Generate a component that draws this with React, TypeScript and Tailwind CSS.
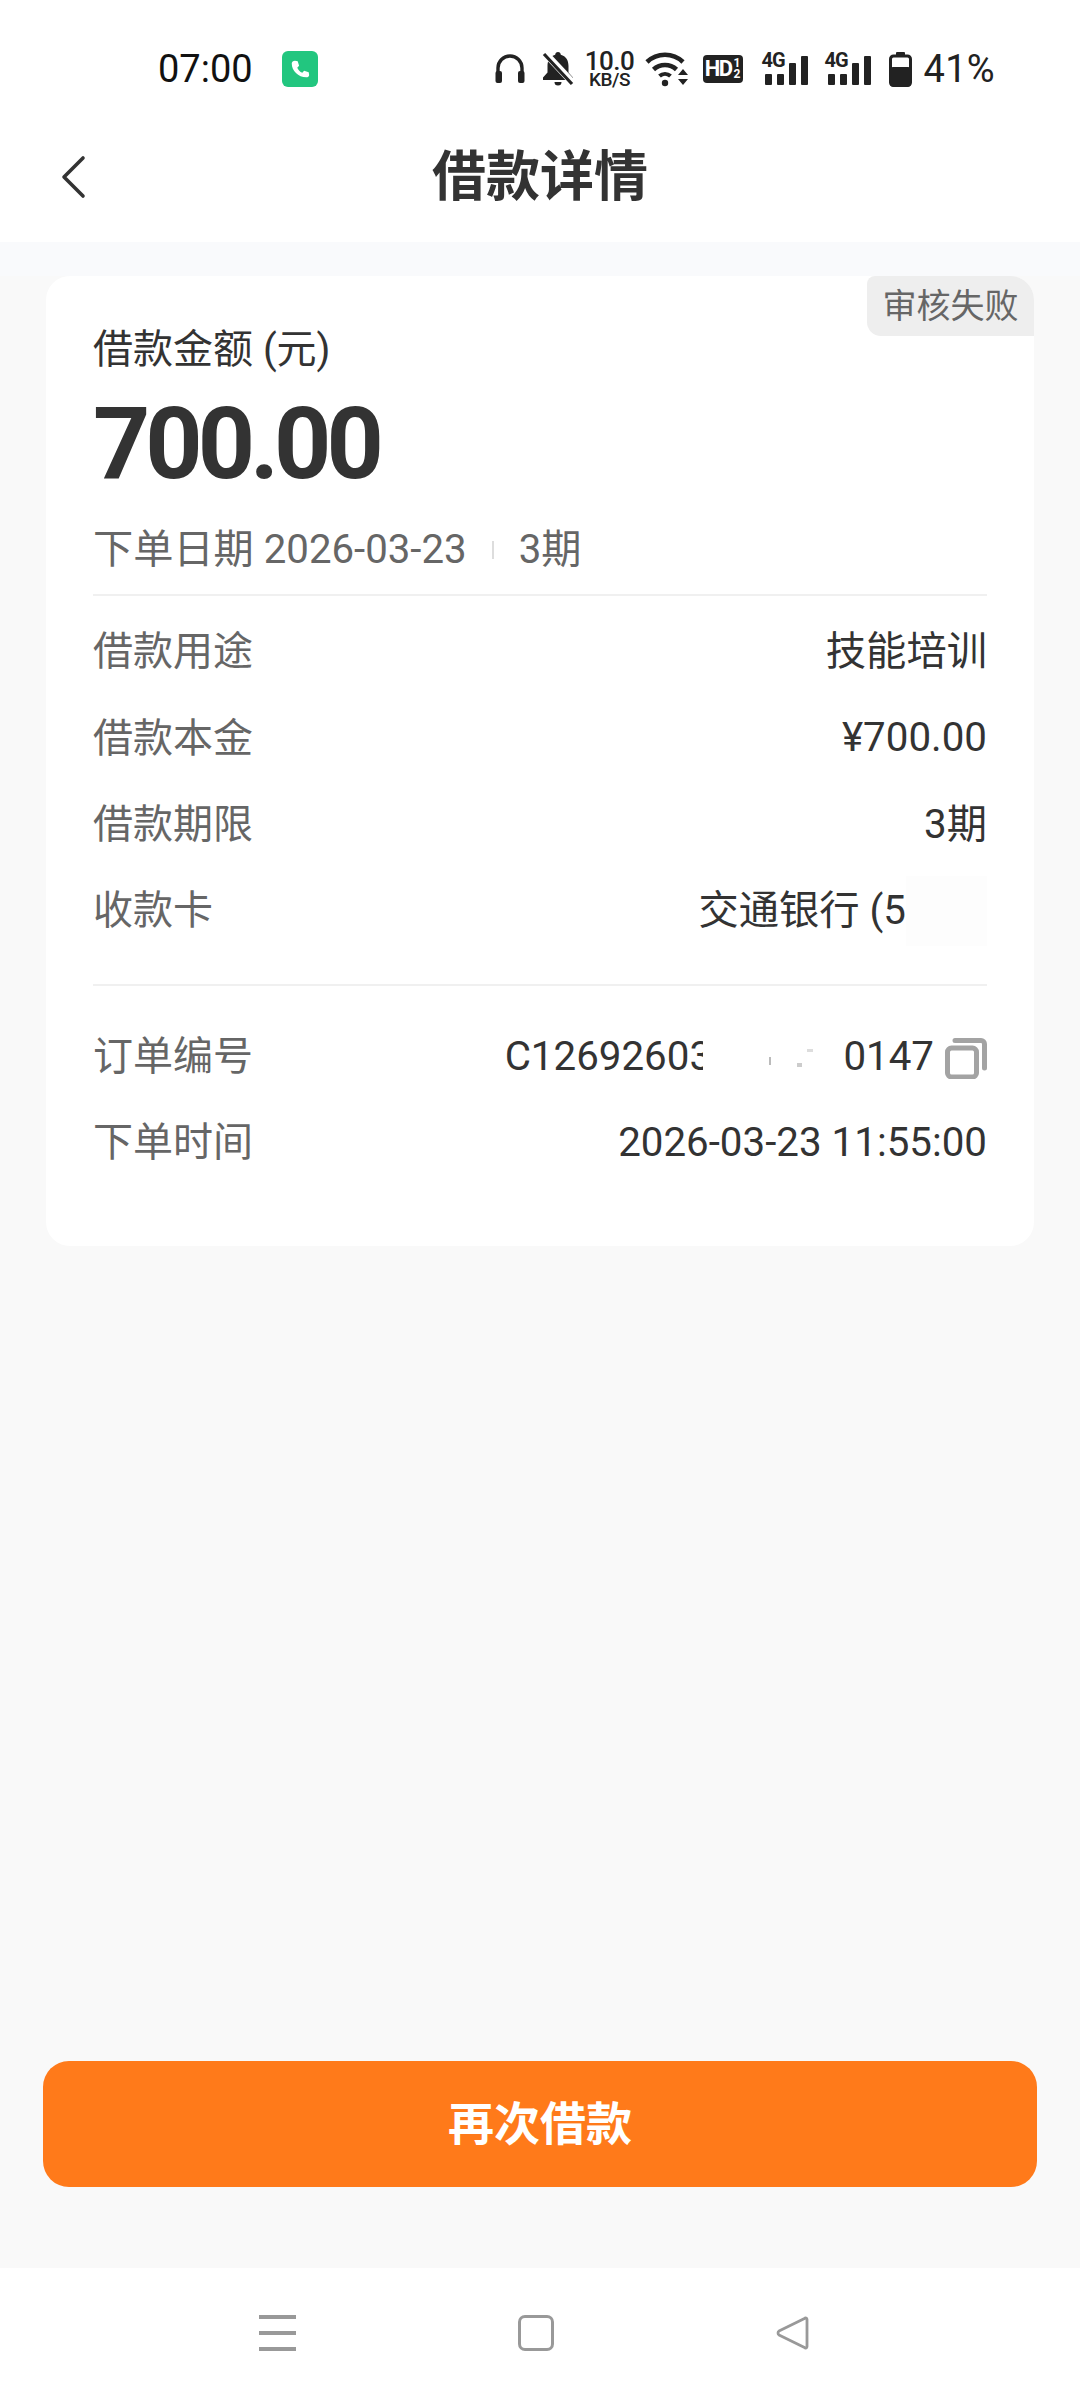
const FONT = "[font-family:Roboto,'Noto_Sans_CJK_SC',sans-serif]";

function StatusIcons() {
  return (
    <div className="flex h-[40px] items-center text-[#222222]">
      {/* headphones */}
      <svg width="30" height="30" viewBox="0 0 30 30" fill="none">
        <path d="M3 19v-5a12 12 0 0 1 24 0v5" stroke="currentColor" strokeWidth="3.4" />
        <rect x="0.5" y="17" width="6.5" height="12" rx="2" fill="currentColor" />
        <rect x="23" y="17" width="6.5" height="12" rx="2" fill="currentColor" />
      </svg>
      {/* muted bell */}
      <svg width="32" height="34" viewBox="0 0 32 34" className="ml-[17px]" fill="none">
        <path
          d="M16 0c1.600 0 2.800 1.200 2.800 2.800C24 4.200 26.500 8.500 26.500 14v6.500L31 25.500v2.500H1v-2.500l4.500-5V14C5.500 8.500 8 4.200 13.200 2.800 13.200 1.200 14.400 0 16 0z"
          fill="currentColor"
        />
        <path d="M12.500 30h7a3.500 3.500 0 0 1-7 0z" fill="currentColor" />
        <path d="M2 0l30 32" stroke="#ffffff" strokeWidth="7" />
        <path d="M2 2l28 30" stroke="currentColor" strokeWidth="3.200" />
      </svg>
      {/* network speed */}
      <div className="ml-[13px] flex w-[46px] flex-col items-center">
        <span className="h-[20px] text-[26px] leading-[20px] font-medium tracking-[-0.5px]">10.0</span>
        <span className="mt-[1px] h-[16px] text-[19px] leading-[16px] font-medium tracking-[-0.5px]">KB/S</span>
      </div>
      {/* wifi */}
      <svg width="44" height="36" viewBox="0 0 44 36" className="ml-[12px]" fill="none">
        <path d="M2 11a26 26 0 0 1 36 0" stroke="currentColor" strokeWidth="4.600" />
        <path d="M8.500 18.500a17 17 0 0 1 23 0" stroke="currentColor" strokeWidth="4.600" />
        <path d="M14.500 25a8.500 8.500 0 0 1 11 0" stroke="currentColor" strokeWidth="4.200" />
        <circle cx="20" cy="32" r="3.200" fill="currentColor" />
        <path d="M38 18l5 6H33zM38 34l-5-6h10z" fill="currentColor" />
      </svg>
      {/* HD badge */}
      <div className="ml-[14px] flex h-[28px] w-[40px] items-center justify-center rounded-[4px] bg-[#222222] text-white">
        <span className="text-[22px] leading-none font-bold tracking-[-1.5px]">HD</span>
        <span className="ml-[2px] flex flex-col items-center text-[12px] leading-[11px] font-bold">
          <span>1</span>
          <span>2</span>
        </span>
      </div>
      <Signal className="ml-[19px]" />
      <Signal className="ml-[17px]" />
      {/* battery */}
      <svg width="23" height="35" viewBox="0 0 23 35" className="ml-[18px]" fill="none">
        <rect x="7" y="0" width="9" height="4" rx="1" fill="currentColor" />
        <rect x="1.500" y="4" width="20" height="29.500" rx="3" stroke="currentColor" strokeWidth="3" />
        <rect x="1" y="15" width="21" height="19.500" rx="3" fill="currentColor" />
      </svg>
      <span className="ml-[12px] text-[38px] leading-none tracking-[0.3px]">41%</span>
    </div>
  );
}

function Signal({ className }: { className: string }) {
  return (
    <div className={`relative h-[32px] w-[46px] ${className}`}>
      <span className="absolute top-[-1px] left-0 text-[20px] leading-[16px] font-bold tracking-[-1px]">4G</span>
      <div className="absolute right-0 bottom-0 flex items-end gap-[5px]">
        <span className="h-[11px] w-[7px] rounded-[1px] bg-[#222222]" />
        <span className="h-[11px] w-[7px] rounded-[1px] bg-[#222222]" />
        <span className="h-[22px] w-[7px] rounded-[1px] bg-[#222222]" />
        <span className="h-[29px] w-[7px] rounded-[1px] bg-[#222222]" />
      </div>
    </div>
  );
}

function Row({ label, children }: { label: string; children: React.ReactNode }) {
  return (
    <div className="flex h-[86.4px] items-center justify-between text-[40px] leading-none">
      <span className="text-[#666666]">{label}</span>
      <div className="flex items-center text-[40.3px] text-[#333333]">{children}</div>
    </div>
  );
}

export default function App() {
  return (
    <div className={`flex h-[2400px] w-[1080px] flex-col bg-[#f9f9f9] ${FONT}`}>
      {/* Status bar */}
      <div className="flex h-[120px] shrink-0 items-start bg-white pt-[49px] pr-[85px] pl-[158px]">
        <div className="flex h-[40px] flex-1 items-center">
          <span className="text-[38px] leading-none text-[#111111]">07:00</span>
          <div className="ml-[29px] flex h-[36px] w-[36px] items-center justify-center rounded-[6px] bg-[#22c67f]">
            <svg width="22" height="22" viewBox="0 0 24 24" fill="#ffffff">
              <path d="M6.500 3l3 .5 1.500 5-2 2c1 2.500 3 4.500 5.500 5.500l2-2 5 1.500.5 3c0 1.500-1.500 2.500-3 2.500C10 21 3 14 3 6c0-1.500 1.500-3 3.500-3z" />
            </svg>
          </div>
        </div>
        <StatusIcons />
      </div>

      {/* Header */}
      <div className="relative flex h-[122px] shrink-0 items-center justify-center bg-white pb-[6px]">
        <svg width="26" height="44" viewBox="0 0 26 44" className="absolute top-[35px] left-[61px]" fill="none">
          <path d="M22 3L3 22l19 19" stroke="#333333" strokeWidth="3.600" strokeLinecap="round" strokeLinejoin="round" />
        </svg>
        <h1 className="text-[54px] leading-none font-bold text-[#333333]">借款详情</h1>
      </div>
      <div className="h-[34px] shrink-0 bg-[#f9fafc]" />

      <main className="flex flex-1 flex-col">
        {/* Order card */}
        <section className="relative mx-[46px] h-[970px] rounded-[24px] bg-white px-[47px] pt-[44px]">
          <div className="absolute top-0 right-0 flex h-[60px] w-[167px] items-center justify-center rounded-tl-[8px] rounded-tr-[24px] rounded-bl-[14px] bg-[#eeeeee] text-[34px] leading-none text-[#666666]">
            审核失败
          </div>

          <div className="flex h-[60px] items-center text-[40px] leading-none text-[#333333]">借款金额 (元)</div>
          <div className="flex h-[128px] items-center text-[100px] leading-none font-bold tracking-[-5px] text-[#333333]">
            700.00
          </div>
          <div className="flex h-[84px] items-center text-[40.2px] leading-none text-[#666666]">
            <span>下单日期 2026-03-23</span>
            <span className="mx-[25px] h-[18px] w-[2px] bg-[#dddddd]" />
            <span>3期</span>
          </div>

          <div className="mt-[2px] border-t-2 border-[#f0f0f0] pt-[13px] pb-[29px]">
            <Row label="借款用途">技能培训</Row>
            <Row label="借款本金">¥700.00</Row>
            <Row label="借款期限">3期</Row>
            <Row label="收款卡">
              <span>交通银行 (5</span>
              <span className="h-[70px] w-[81px] bg-[#fdfdfd]" />
            </Row>
          </div>

          <div className="border-t-2 border-[#f0f0f0] pt-[28px]">
            <Row label="订单编号">
              <span>C1269260</span>
              <span className="inline-block w-[14px] overflow-hidden">3</span>
              {/* masked part of the order number */}
              <span className="relative h-[60px] w-[140px] bg-white">
                <span className="absolute top-[30px] left-[66px] h-[8px] w-[2px] bg-[#bbbbbb]" />
                <span className="absolute top-[36px] left-[94px] h-[4px] w-[5px] bg-[#cccccc]" />
                <span className="absolute top-[22px] left-[104px] h-[3px] w-[6px] bg-[#dddddd]" />
              </span>
              <span>0147</span>
              <svg width="42" height="42" viewBox="0 0 42 42" className="mt-[2px] ml-[11px]" fill="none">
                <rect x="2.500" y="11" width="29" height="29" rx="4" stroke="#a3a3a3" strokeWidth="5" />
                <path d="M10 3.500h26a3.500 3.500 0 0 1 3.500 3.500v24" stroke="#a3a3a3" strokeWidth="5" strokeLinecap="round" />
              </svg>
            </Row>
            <Row label="下单时间">2026-03-23 11:55:00</Row>
          </div>
        </section>

        <div className="mt-auto px-[43px] pb-[81px]">
          <button className="flex h-[126px] w-full items-center justify-center rounded-[26px] bg-[#ff7a1a] text-[46px] leading-none font-bold text-white">
            再次借款
          </button>
        </div>
      </main>

      {/* Navigation bar */}
      <nav className="flex h-[132px] shrink-0 items-start justify-between bg-white pt-[47px] pr-[269px] pl-[259px]">
        <div className="flex h-[36px] w-[37px] flex-col justify-between">
          <span className="h-[4px] bg-[#999999]" />
          <span className="h-[4px] bg-[#999999]" />
          <span className="h-[4px] bg-[#999999]" />
        </div>
        <div className="h-[36px] w-[36px] rounded-[7px] border-[3px] border-[#999999]" />
        <svg width="36" height="36" viewBox="0 0 36 36" fill="none">
          <path
            d="M32 4.500v27c0 1.500-1.500 2-2.500 1L4 20c-1.300-1-1.300-3 0-4L29.500 3.500c1-1 2.500-.5 2.500 1z"
            stroke="#999999"
            strokeWidth="2.800"
            strokeLinejoin="round"
          />
        </svg>
      </nav>
    </div>
  );
}
